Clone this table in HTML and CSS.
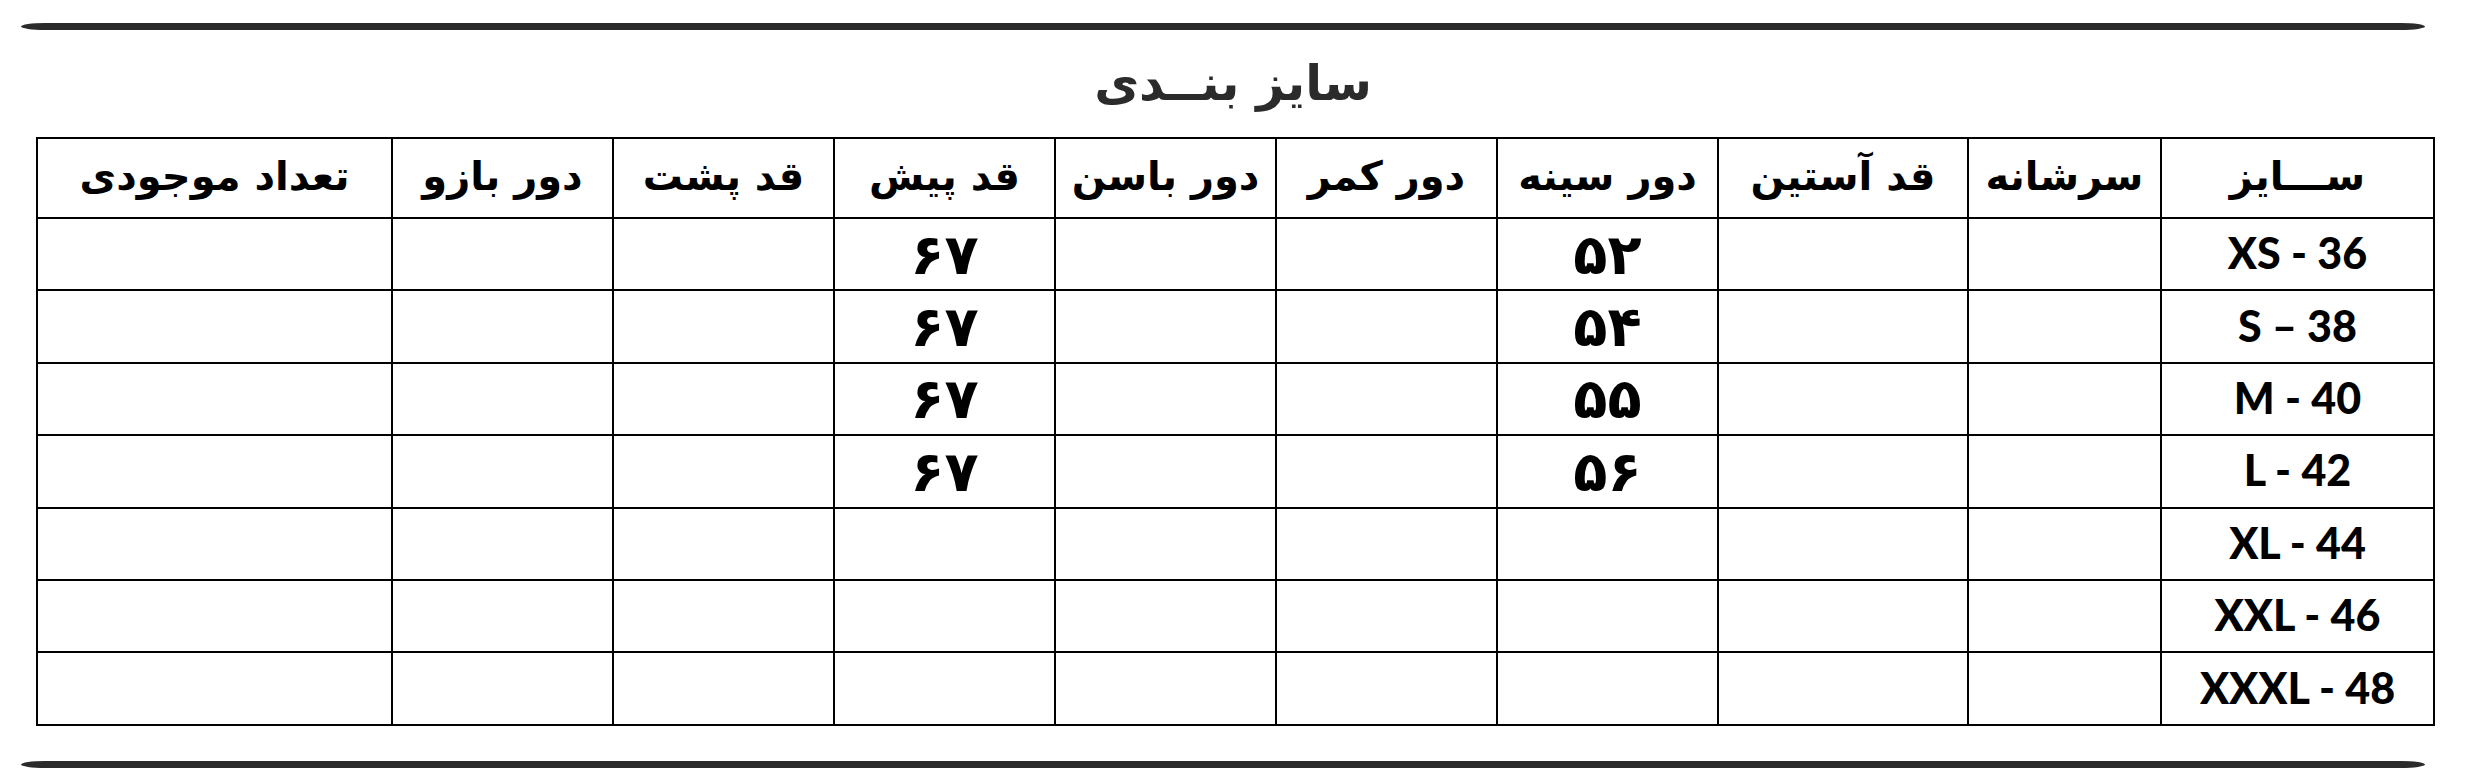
FILE: index.html
```html
<!DOCTYPE html>
<html lang="fa">
<head>
<meta charset="utf-8">
<title>سایز بندی</title>
<link rel="stylesheet" href="styles.css">
</head>
<body>
<div class="page">
  <div class="rule"></div>
  <h1 class="title" dir="rtl">سایز بنــدی</h1>
  <table class="sizes" dir="rtl">
    <colgroup>
      <col class="c-size">
      <col class="c-shoulder">
      <col class="c-sleeve">
      <col class="c-std">
      <col class="c-std">
      <col class="c-std">
      <col class="c-std">
      <col class="c-std">
      <col class="c-std">
      <col class="c-stock">
    </colgroup>
    <thead>
      <tr>
        <th>ســـایز</th>
        <th>سرشانه</th>
        <th>قد آستین</th>
        <th>دور سینه</th>
        <th>دور کمر</th>
        <th>دور باسن</th>
        <th>قد پیش</th>
        <th>قد پشت</th>
        <th>دور بازو</th>
        <th>تعداد موجودی</th>
      </tr>
    </thead>
    <tbody>
      <tr><td class="lat" dir="ltr">XS - 36</td><td></td><td></td><td class="num">۵۲</td><td></td><td></td><td class="num">۶۷</td><td></td><td></td><td></td></tr>
      <tr><td class="lat" dir="ltr">S – 38</td><td></td><td></td><td class="num">۵۴</td><td></td><td></td><td class="num">۶۷</td><td></td><td></td><td></td></tr>
      <tr><td class="lat" dir="ltr">M - 40</td><td></td><td></td><td class="num">۵۵</td><td></td><td></td><td class="num">۶۷</td><td></td><td></td><td></td></tr>
      <tr><td class="lat" dir="ltr">L - 42</td><td></td><td></td><td class="num">۵۶</td><td></td><td></td><td class="num">۶۷</td><td></td><td></td><td></td></tr>
      <tr><td class="lat" dir="ltr">XL - 44</td><td></td><td></td><td></td><td></td><td></td><td></td><td></td><td></td><td></td></tr>
      <tr><td class="lat" dir="ltr">XXL - 46</td><td></td><td></td><td></td><td></td><td></td><td></td><td></td><td></td><td></td></tr>
      <tr><td class="lat" dir="ltr">XXXL - 48</td><td></td><td></td><td></td><td></td><td></td><td></td><td></td><td></td><td></td></tr>
    </tbody>
  </table>
  <div class="rule bottom"></div>
</div>
</body>
</html>
```

FILE: styles.css
```css
html, body {
  margin: 0;
  padding: 0;
  background: #ffffff;
}

.page {
  width: 2480px;
  height: 780px;
  padding: 23px 0 0 21px;
  box-sizing: border-box;
  display: flex;
  flex-direction: column;
  align-items: flex-start;
  font-family: "DejaVu Sans", sans-serif;
  color: #000;
}

.rule {
  width: 2404px;
  height: 7px;
  background: #2b2b2b;
  border-radius: 24px / 3.5px;
  flex: none;
}

.rule.bottom {
  margin-top: 35px;
}

.title {
  margin: 0;
  width: 2424px;
  height: 107px;
  display: flex;
  align-items: center;
  justify-content: center;
  font-family: "DejaVu Sans", sans-serif;
  font-weight: bold;
  font-size: 49px;
  color: #2b2b2b;
  box-sizing: border-box;
}

.sizes {
  margin-left: 15px;
  width: 2398px;
  table-layout: fixed;
  border-collapse: collapse;
  border: 2px solid #000;
}

.c-size { width: 273px; }
.c-shoulder { width: 193px; }
.c-sleeve { width: 250px; }
.c-std { width: 221px; }
.c-stock { width: 355px; }

.sizes th,
.sizes td {
  border: 2px solid #000;
  padding: 0;
  text-align: center;
  vertical-align: middle;
}

.sizes thead tr {
  height: 80px;
}

.sizes tbody tr {
  height: 72.4px;
}

.sizes th {
  font-family: "DejaVu Sans", sans-serif;
  font-weight: bold;
  font-size: 40px;
  padding-bottom: 4px;
}

.sizes td.lat {
  font-family: Lato, "Open Sans", sans-serif;
  font-weight: 900;
  font-size: 43px;
  padding-bottom: 3px;
}

.sizes td.num {
  font-family: "DejaVu Sans", sans-serif;
  font-weight: bold;
  font-size: 56px;
}
```
